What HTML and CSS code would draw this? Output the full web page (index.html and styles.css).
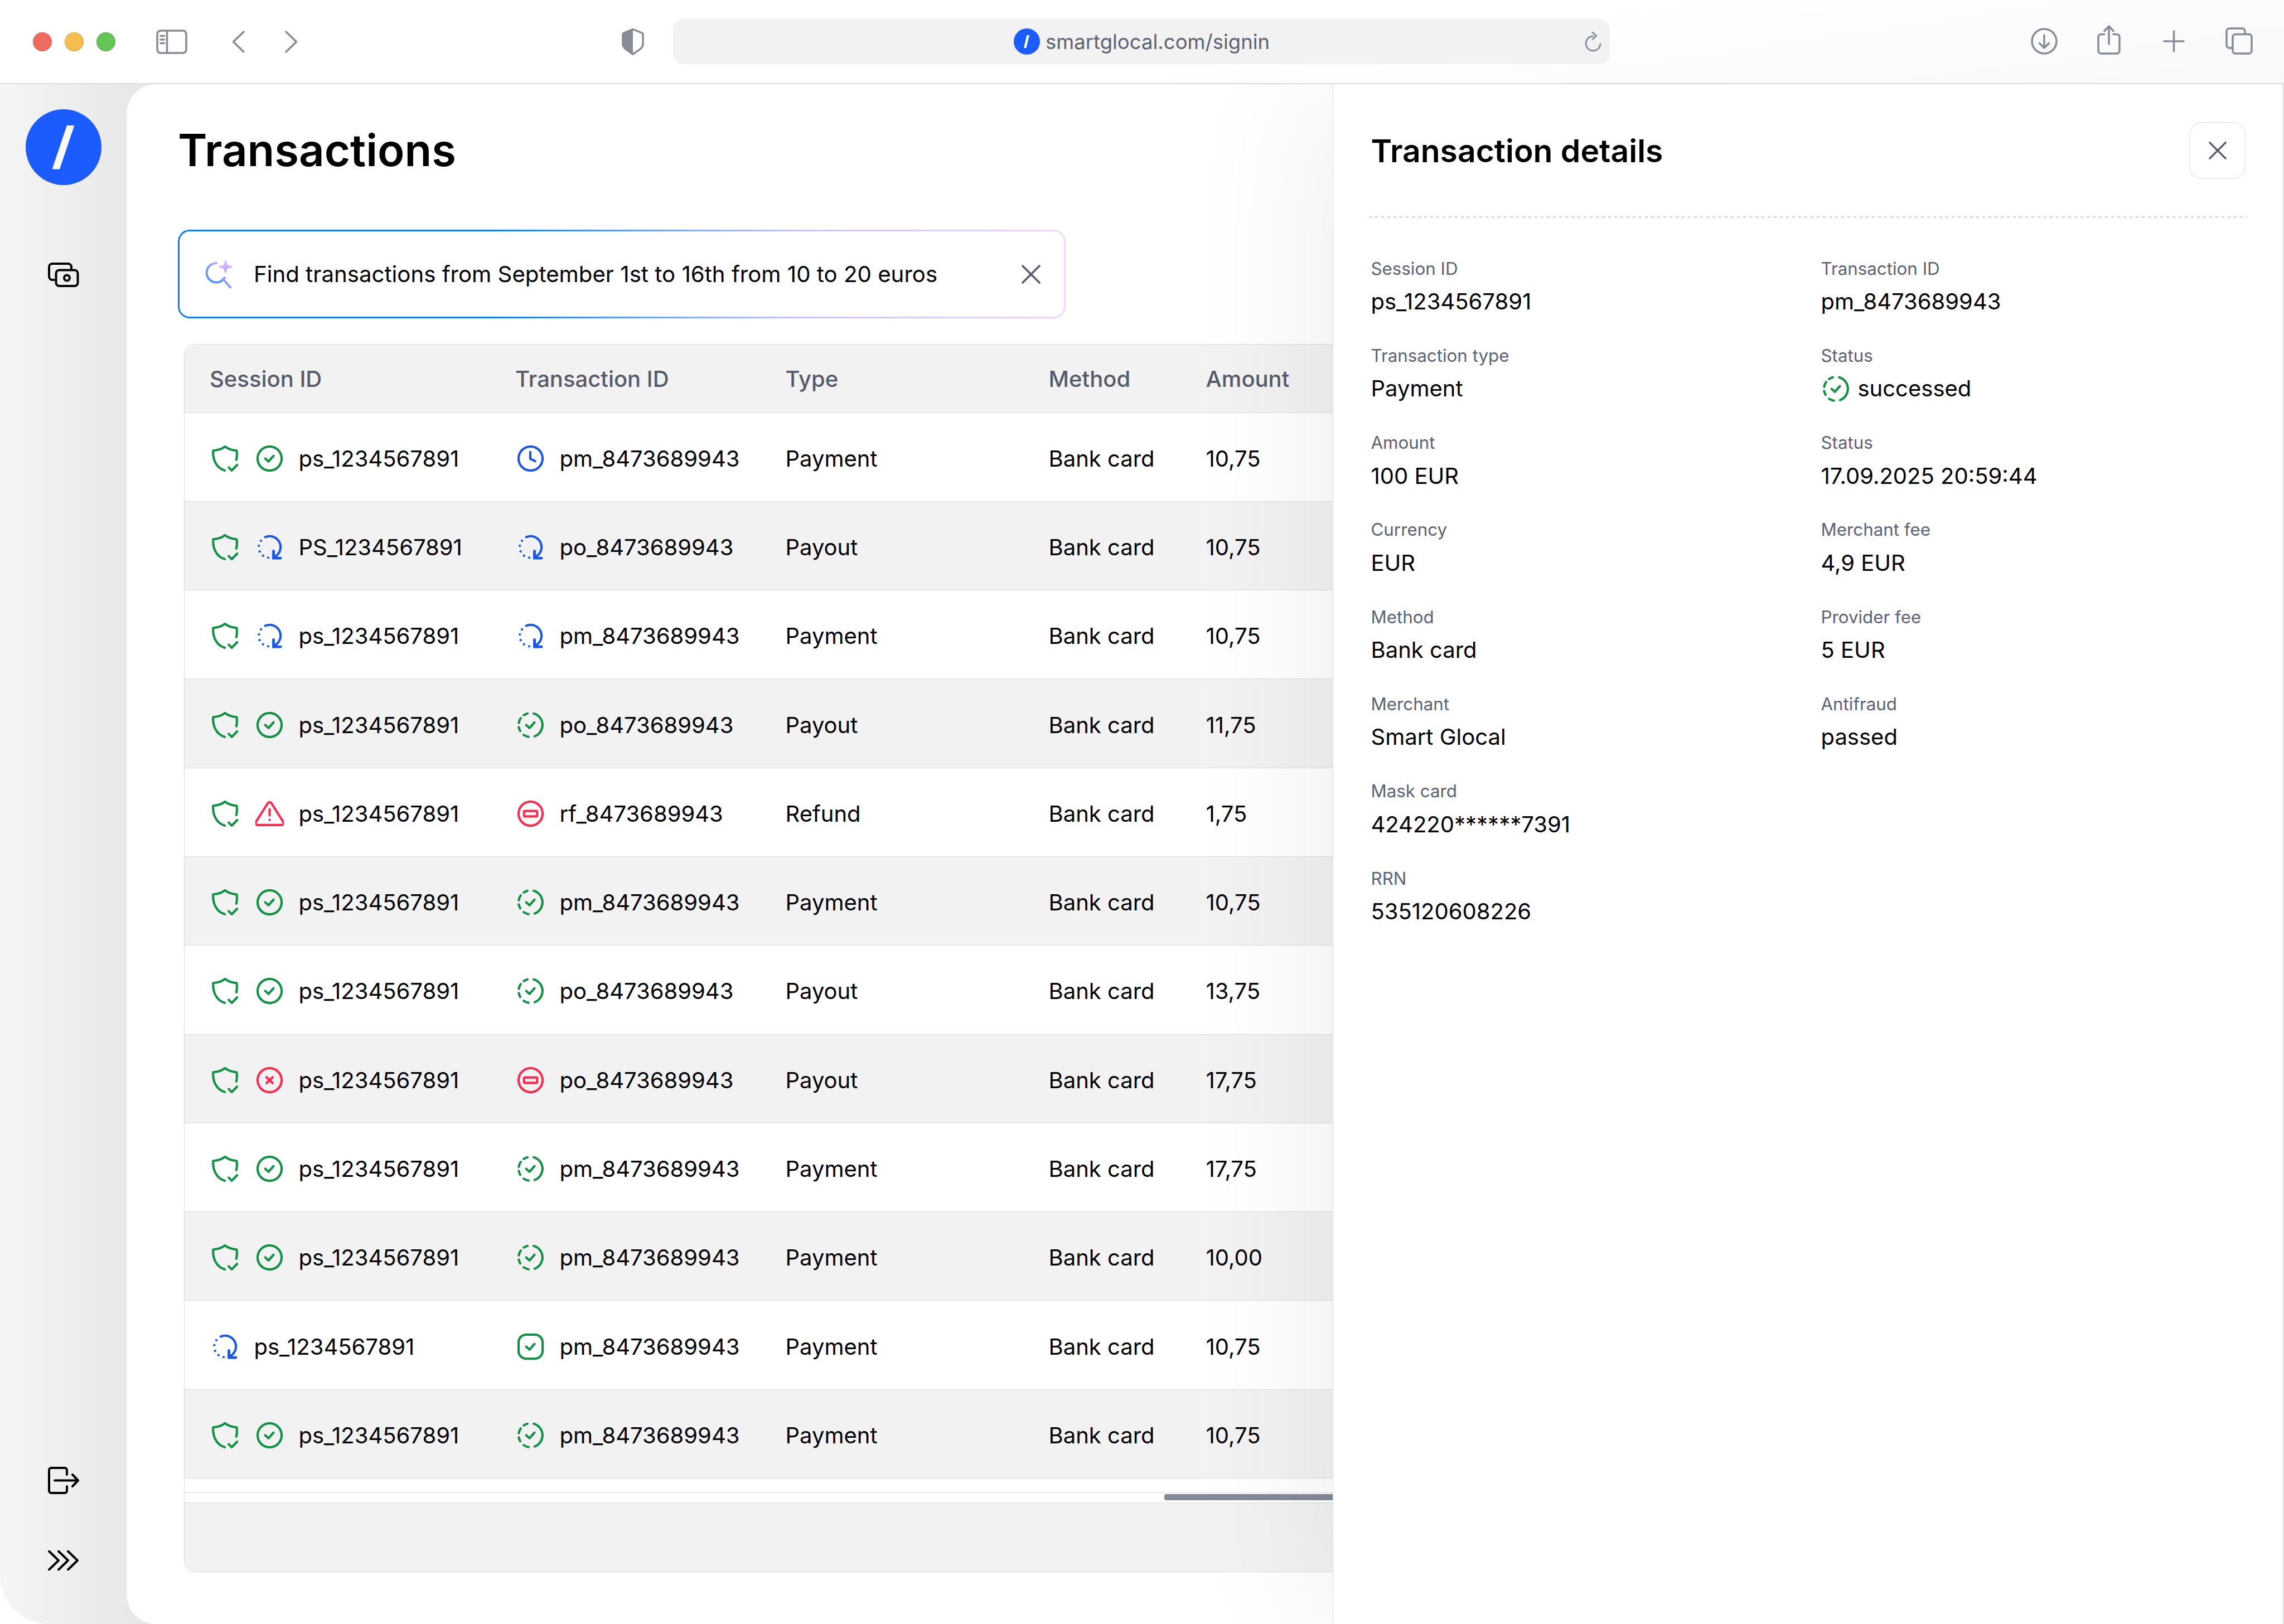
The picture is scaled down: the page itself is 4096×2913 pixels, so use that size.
FILE: index.html
```html
<!DOCTYPE html>
<html lang="en">
<head>
  <meta charset="UTF-8" />
  <title>Transactions</title>
  <link rel="stylesheet" href="styles.css">
</head>
<body>

<!-- icon sprite -->
<svg class="sprite" xmlns="http://www.w3.org/2000/svg">
  <defs>
    <linearGradient id="glassStroke" gradientUnits="userSpaceOnUse" x1="24" y1="4" x2="12" y2="40">
      <stop offset="0" stop-color="#c3a8ff"/>
      <stop offset="0.5" stop-color="#6f9dff"/>
      <stop offset="1" stop-color="#5a94ff"/>
    </linearGradient>
    <linearGradient id="sparkFill" gradientUnits="userSpaceOnUse" x1="36" y1="0" x2="36" y2="24">
      <stop offset="0" stop-color="#edbdff"/>
      <stop offset="1" stop-color="#b7a4ff"/>
    </linearGradient>
  </defs>
  <symbol id="i-shield" viewBox="0 0 24 24">
    <path d="M22.4 13.2C23 10.5 23 7.5 22.7 4.7 18 4.6 14.8 3.2 12 1 9.2 3.2 6 4.6 1.2 4.7 0.6 12 3.5 20.5 11.7 22.9"/>
    <path d="M15.4 20.1l2.8 2.8 4.9-5"/>
  </symbol>
  <symbol id="i-check" viewBox="0 0 24 24">
    <circle cx="12" cy="12" r="11"/>
    <path d="M8 12l3 2.7 4.6-5.2"/>
  </symbol>
  <symbol id="i-load" viewBox="0 0 24 24">
    <path d="M8 2.8A10 10 0 0 1 12 1.9 10 10 0 0 1 17.3 20.4"/>
    <path class="heavy" d="M15.6 15.6V22H22"/>
    <g class="dots">
      <circle cx="4.1" cy="6.1" r="1.1"/>
      <circle cx="2.2" cy="10.7" r="1.1"/>
      <circle cx="2.9" cy="15.9" r="1.1"/>
      <circle cx="6" cy="19.8" r="1.1"/>
      <circle cx="10.7" cy="21.6" r="1.1"/>
    </g>
  </symbol>
  <symbol id="i-clock" viewBox="0 0 24 24">
    <circle cx="12" cy="12" r="11"/>
    <path d="M11.7 6v6.2l4.5 2.2"/>
  </symbol>
  <symbol id="i-dash" viewBox="0 0 24 24">
    <path d="M14.85 1.4A11 11 0 0 1 15.76 22.3"/>
    <path d="M10.1 22.8A11 11 0 0 1 5.7 21"/>
    <path d="M2.5 17.5A11 11 0 0 1 1.2 13.9"/>
    <path d="M1.2 10.1A11 11 0 0 1 3 5.7"/>
    <path d="M5.7 3A11 11 0 0 1 9.15 1.4"/>
    <path d="M8 12l3 2.7 4.6-5.2"/>
  </symbol>
  <symbol id="i-stop" viewBox="0 0 24 24">
    <circle cx="12" cy="12" r="11"/>
    <rect x="6" y="9.5" width="12" height="5" rx="0.8"/>
  </symbol>
  <symbol id="i-warn" viewBox="-1 0 26 24">
    <path d="M10.4 2.3a1.9 1.9 0 0 1 3.2 0L24.5 19.5a1.9 1.9 0 0 1-1.6 2.9H1.1a1.9 1.9 0 0 1-1.6-2.9Z"/>
    <path d="M12 8v5.6M12 17.7v.1"/>
  </symbol>
  <symbol id="i-cross" viewBox="0 0 24 24">
    <circle cx="12" cy="12" r="11"/>
    <path d="M9.2 9.3l5.6 5.4M14.8 9.3l-5.6 5.4"/>
  </symbol>
  <symbol id="i-square" viewBox="0 0 24 24">
    <rect x="1" y="1" width="22" height="22" rx="7"/>
    <path d="M8 12l3 2.7 4.6-5.2"/>
  </symbol>
</svg>

<header class="topbar">
  <div class="lights">
    <span class="light light-red"></span>
    <span class="light light-yellow"></span>
    <span class="light light-green"></span>
  </div>
  <svg class="tb tb-side" viewBox="0 0 56 44">
    <rect x="2" y="2" width="52" height="40" rx="6"/>
    <path d="M19.5 2v40M8 11.5h6.5M8 18h6.5M8 24.500h6.500"/>
  </svg>
  <svg class="tb tb-back" viewBox="0 0 24 40"><path d="M21 2L2.500 20 21 38"/></svg>
  <svg class="tb tb-next" viewBox="0 0 24 40"><path d="M3 2l18.500 18L3 38"/></svg>
  <svg class="tb tb-guard" viewBox="0 0 40 48">
    <path class="guard-half" d="M20 1.500V46.500C12 39 2 37 2 28V11Q2 9 4 8Z"/>
    <path d="M20 1.500L36 8Q38 9 38 11V28C38 37 28 39 20 46.500 12 39 2 37 2 28V11Q2 9 4 8Z"/>
  </svg>
  <div class="urlbar">
    <span class="url-logo"></span>
    <span class="url-text">smartglocal.com/signin</span>
    <svg class="tb tb-reload" viewBox="0 0 32 38">
      <path d="M16 9A13 13 0 1 0 29 23"/>
      <path d="M15 2l7 6.500-7 6"/>
    </svg>
  </div>
  <div class="tb-actions">
    <svg class="tb tb-down" viewBox="0 0 50 48">
      <circle cx="25" cy="24" r="22"/>
      <path d="M25 13v23M16.500 27.500L25 36l8.500-8.500"/>
    </svg>
    <svg class="tb tb-share" viewBox="0 0 42 53">
      <path d="M13 16.500H7a5 5 0 0 0-5 5V46a5 5 0 0 0 5 5h28a5 5 0 0 0 5-5V21.500a5 5 0 0 0-5-5h-6"/>
      <path d="M21 2v32M13 10.500L21 2l8 8.500"/>
    </svg>
    <svg class="tb tb-plus" viewBox="0 0 39 40"><path d="M19.500 2v36M2 20h35"/></svg>
    <svg class="tb tb-tabs" viewBox="0 0 49 49">
      <path d="M11 37H7a5 5 0 0 1-5-5V7a5 5 0 0 1 5-5h23a5 5 0 0 1 5 5v5"/>
      <rect x="13" y="12.500" width="34" height="34.500" rx="5"/>
    </svg>
  </div>
</header>

<div class="app">
  <aside class="sidebar">
    <div class="logo"><span class="logo-slash"></span></div>
    <svg class="side-ico side-wallet" viewBox="0 0 56 44">
      <path d="M11 31H8a6 6 0 0 1-6-6V8a6 6 0 0 1 6-6h28a6 6 0 0 1 6 6v4"/>
      <rect x="14.500" y="13.500" width="39" height="28.500" rx="6"/>
      <circle cx="34" cy="27.500" r="5"/>
    </svg>
    <svg class="side-ico side-exit" viewBox="0 0 56 49">
      <path d="M34 14V6a4 4 0 0 0-4-4H6a4 4 0 0 0-4 4v37a4 4 0 0 0 4 4h24a4 4 0 0 0 4-4v-8"/>
      <path d="M12 24.500h41M44 14l10 10.500L44 35"/>
    </svg>
    <svg class="side-ico side-more" viewBox="0 0 56 36">
      <path d="M2 1.500L19 18 2 34.500M19 1.500L36 18 19 34.500M36 1.500L53 18 36 34.500"/>
    </svg>
  </aside>

  <main class="main">
    <h1>Transactions</h1>

    <div class="search">
      <svg class="search-ico" viewBox="0 0 50 51">
        <path class="glass" d="M21.600 6A17.300 17.300 0 1 0 35.300 31"/>
        <path class="glass-handle" d="M32.700 35.500L45.400 49.800"/>
        <path class="spark" d="M36.500 0c1.600 0 2 6.500 3 8.500 1 2 9.500 2.300 9.500 4s-8.500 2-9.500 4c-1 2-1.400 7.200-3 7.200s-2-5.200-3-7.200c-1-2-9.500-2.300-9.500-4s8.500-2 9.500-4c1-2 1.400-8.500 3-8.500Z"/>
      </svg>
      <span class="search-text">Find transactions from September 1st to 16th from 10 to 20 euros</span>
      <svg class="search-close" viewBox="0 0 34 34"><path d="M2 2l30 30M32 2L2 32"/></svg>
    </div>

    <div class="table">
      <div class="row row-head">
        <div>Session ID</div>
        <div>Transaction ID</div>
        <div>Type</div>
        <div>Method</div>
        <div>Amount</div>
      </div>

      <div class="row">
        <div class="ids"><svg class="ico ok shield"><use href="#i-shield"/></svg><svg class="ico ok"><use href="#i-check"/></svg><span>ps_1234567891</span></div>
        <div class="ids"><svg class="ico info"><use href="#i-clock"/></svg><span>pm_8473689943</span></div>
        <div>Payment</div><div>Bank card</div><div>10,75</div>
      </div>
      <div class="row">
        <div class="ids"><svg class="ico ok shield"><use href="#i-shield"/></svg><svg class="ico info"><use href="#i-load"/></svg><span>PS_1234567891</span></div>
        <div class="ids"><svg class="ico info"><use href="#i-load"/></svg><span>po_8473689943</span></div>
        <div>Payout</div><div>Bank card</div><div>10,75</div>
      </div>
      <div class="row">
        <div class="ids"><svg class="ico ok shield"><use href="#i-shield"/></svg><svg class="ico info"><use href="#i-load"/></svg><span>ps_1234567891</span></div>
        <div class="ids"><svg class="ico info"><use href="#i-load"/></svg><span>pm_8473689943</span></div>
        <div>Payment</div><div>Bank card</div><div>10,75</div>
      </div>
      <div class="row">
        <div class="ids"><svg class="ico ok shield"><use href="#i-shield"/></svg><svg class="ico ok"><use href="#i-check"/></svg><span>ps_1234567891</span></div>
        <div class="ids"><svg class="ico ok"><use href="#i-dash"/></svg><span>po_8473689943</span></div>
        <div>Payout</div><div>Bank card</div><div>11,75</div>
      </div>
      <div class="row">
        <div class="ids"><svg class="ico ok shield"><use href="#i-shield"/></svg><svg class="ico bad wide"><use href="#i-warn"/></svg><span>ps_1234567891</span></div>
        <div class="ids"><svg class="ico bad"><use href="#i-stop"/></svg><span>rf_8473689943</span></div>
        <div>Refund</div><div>Bank card</div><div>1,75</div>
      </div>
      <div class="row">
        <div class="ids"><svg class="ico ok shield"><use href="#i-shield"/></svg><svg class="ico ok"><use href="#i-check"/></svg><span>ps_1234567891</span></div>
        <div class="ids"><svg class="ico ok"><use href="#i-dash"/></svg><span>pm_8473689943</span></div>
        <div>Payment</div><div>Bank card</div><div>10,75</div>
      </div>
      <div class="row">
        <div class="ids"><svg class="ico ok shield"><use href="#i-shield"/></svg><svg class="ico ok"><use href="#i-check"/></svg><span>ps_1234567891</span></div>
        <div class="ids"><svg class="ico ok"><use href="#i-dash"/></svg><span>po_8473689943</span></div>
        <div>Payout</div><div>Bank card</div><div>13,75</div>
      </div>
      <div class="row">
        <div class="ids"><svg class="ico ok shield"><use href="#i-shield"/></svg><svg class="ico bad"><use href="#i-cross"/></svg><span>ps_1234567891</span></div>
        <div class="ids"><svg class="ico bad"><use href="#i-stop"/></svg><span>po_8473689943</span></div>
        <div>Payout</div><div>Bank card</div><div>17,75</div>
      </div>
      <div class="row">
        <div class="ids"><svg class="ico ok shield"><use href="#i-shield"/></svg><svg class="ico ok"><use href="#i-check"/></svg><span>ps_1234567891</span></div>
        <div class="ids"><svg class="ico ok"><use href="#i-dash"/></svg><span>pm_8473689943</span></div>
        <div>Payment</div><div>Bank card</div><div>17,75</div>
      </div>
      <div class="row">
        <div class="ids"><svg class="ico ok shield"><use href="#i-shield"/></svg><svg class="ico ok"><use href="#i-check"/></svg><span>ps_1234567891</span></div>
        <div class="ids"><svg class="ico ok"><use href="#i-dash"/></svg><span>pm_8473689943</span></div>
        <div>Payment</div><div>Bank card</div><div>10,00</div>
      </div>
      <div class="row">
        <div class="ids"><svg class="ico info"><use href="#i-load"/></svg><span>ps_1234567891</span></div>
        <div class="ids"><svg class="ico ok"><use href="#i-square"/></svg><span>pm_8473689943</span></div>
        <div>Payment</div><div>Bank card</div><div>10,75</div>
      </div>
      <div class="row">
        <div class="ids"><svg class="ico ok shield"><use href="#i-shield"/></svg><svg class="ico ok"><use href="#i-check"/></svg><span>ps_1234567891</span></div>
        <div class="ids"><svg class="ico ok"><use href="#i-dash"/></svg><span>pm_8473689943</span></div>
        <div>Payment</div><div>Bank card</div><div>10,75</div>
      </div>

      <div class="table-gap"></div>
      <div class="scroll-track"><div class="scroll-thumb"></div></div>
      <div class="table-foot"></div>
    </div>
  </main>

  <section class="details">
    <div class="details-head">
      <h2>Transaction details</h2>
      <button class="close-btn" type="button">
        <svg viewBox="0 0 34 34"><path d="M2 2l30 30M32 2L2 32"/></svg>
      </button>
    </div>
    <div class="dots-line"></div>

    <dl class="fields">
      <div><dt>Session ID</dt><dd>ps_1234567891</dd></div>
      <div><dt>Transaction ID</dt><dd>pm_8473689943</dd></div>
      <div><dt>Transaction type</dt><dd>Payment</dd></div>
      <div><dt>Status</dt><dd class="status"><svg class="ico ok"><use href="#i-dash"/></svg>successed</dd></div>
      <div><dt>Amount</dt><dd>100 EUR</dd></div>
      <div><dt>Status</dt><dd>17.09.2025 20:59:44</dd></div>
      <div><dt>Currency</dt><dd>EUR</dd></div>
      <div><dt>Merchant fee</dt><dd>4,9 EUR</dd></div>
      <div><dt>Method</dt><dd>Bank card</dd></div>
      <div><dt>Provider fee</dt><dd>5 EUR</dd></div>
      <div><dt>Merchant</dt><dd>Smart Glocal</dd></div>
      <div><dt>Antifraud</dt><dd>passed</dd></div>
      <div><dt>Mask card</dt><dd>424220******7391</dd></div>
      <div></div>
      <div><dt>RRN</dt><dd>535120608226</dd></div>
    </dl>
  </section>
</div>

</body>
</html>
```

FILE: styles.css
```css
* { box-sizing: border-box; }

html, body {
  margin: 0;
  height: 2913px;
  overflow: hidden;
}

body {
  background: #fff;
  color: #000;
  font-family: Inter, "Noto Sans", sans-serif;
  font-size: 40px;
}

.sprite {
  position: absolute;
  width: 0;
  height: 0;
}

/* browser chrome */

.topbar {
  height: 151px;
  display: flex;
  align-items: center;
  padding-left: 59px;
  border-bottom: 2px solid #dcdcdc;
  background: linear-gradient(172deg, #fff 55%, #f8f8f8 100%);
}

.lights {
  display: flex;
  gap: 23px;
  margin-right: 73px;
}

.light {
  width: 34px;
  height: 34px;
  border-radius: 50%;
  border: 1px solid rgba(0,0,0,0.12);
}

.light-red { background: #ef6b5f; }
.light-yellow { background: #f5bd4f; }
.light-green { background: #62c554; }

.tb {
  fill: none;
  stroke: #868b96;
  stroke-width: 3.5;
  stroke-linecap: round;
  stroke-linejoin: round;
  flex: none;
}

.tb-side { width: 56px; height: 44px; margin-right: 80px; }
.tb-back { width: 24px; height: 40px; margin-right: 70px; }
.tb-next { width: 24px; height: 40px; margin-right: 581px; }
.tb-guard { width: 40px; height: 48px; margin-right: 52px; }
.guard-half { fill: #868b96; stroke: none; }

.urlbar {
  position: relative;
  width: 1680px;
  height: 80px;
  background: #f2f2f2;
  border-radius: 18px;
  display: flex;
  align-items: center;
  padding-left: 611px;
  color: #5e6372;
  font-size: 36.5px;
}

.url-logo {
  position: relative;
  width: 47px;
  height: 47px;
  border-radius: 50%;
  background: #1c5cff;
  margin-right: 10px;
}

.url-logo::after {
  content: "";
  position: absolute;
  left: 18px;
  top: 12px;
  width: 10px;
  height: 23px;
  background: #fff;
  clip-path: polygon(55% 0, 100% 0, 45% 100%, 0 100%);
}

.tb-reload {
  position: absolute;
  right: 14px;
  top: 21px;
  width: 32px;
  height: 38px;
  stroke-width: 2.8;
}

.tb-actions {
  display: flex;
  align-items: flex-end;
  margin: 0 0 6px 754px;
}

.tb-down { width: 50px; height: 48px; margin-right: 70px; }
.tb-share { width: 42px; height: 53px; margin-right: 76px; }
.tb-plus { width: 39px; height: 40px; margin-right: 73px; margin-bottom: 4px; }
.tb-tabs { width: 49px; height: 49px; }

/* app shell */

.app {
  height: 2762px;
  display: flex;
  background: linear-gradient(90deg, #f5f5f5 0, #e8e8e8 227px);
  border-bottom-left-radius: 88px;
  overflow: hidden;
}

.sidebar {
  width: 227px;
  flex: none;
  display: flex;
  flex-direction: column;
  align-items: center;
  padding: 45px 0 96px;
}

.logo {
  width: 136px;
  height: 136px;
  border-radius: 50%;
  background: #1c5cff;
  display: flex;
  align-items: center;
  justify-content: center;
}

.logo-slash {
  width: 40px;
  height: 79px;
  background: #fbfbfb;
  clip-path: polygon(66.500% 0, 100% 0, 33.500% 100%, 0 100%);
}

.side-ico {
  flex: none;
  fill: none;
  stroke: #000;
  stroke-width: 4;
  stroke-linecap: round;
  stroke-linejoin: round;
  width: 56px;
}

.side-wallet { height: 44px; margin-top: 139px; }
.side-exit { height: 49px; margin-top: auto; }
.side-more { height: 36px; margin-top: 101px; }

/* transactions */

.main {
  flex: 1;
  min-width: 0;
  background: #fff;
  border-radius: 53px 0 0 53px;
  padding: 68px 0 0 92px;
  overflow: hidden;
}

h1 {
  margin: 0;
  font-size: 79.6px;
  line-height: 100px;
  font-weight: 600;
}

.search {
  width: 1592px;
  height: 159px;
  margin-top: 93px;
  display: flex;
  align-items: center;
  padding: 0 42px 0 46px;
  border: 3px solid transparent;
  border-radius: 21px;
  background:
    linear-gradient(#fff, #fff) padding-box,
    linear-gradient(90deg, #0a7cff 0, #0a7cff 35%, #c8c4ff 70%, #f0d8ff 100%) border-box;
}

.search-text { font-size: 40.2px; }

.search-ico {
  width: 50px;
  height: 51px;
  flex: none;
  margin-right: 37px;
}

.glass {
  fill: none;
  stroke: url(#glassStroke);
  stroke-width: 4;
}

.glass-handle {
  fill: none;
  stroke: #8ea2ff;
  stroke-width: 4;
  stroke-linecap: round;
}

.spark { fill: url(#sparkFill); }

.search-close {
  width: 34px;
  height: 34px;
  margin-left: auto;
  fill: none;
  stroke: #555b6b;
  stroke-width: 3.6;
  stroke-linecap: round;
}

.table {
  width: 2400px;
  margin: 46px 0 0 11px;
  border: 1.5px solid #dcdcdc;
  border-radius: 20px;
  overflow: hidden;
}

.row {
  height: 159.3px;
  display: grid;
  grid-template-columns: 548px 484.5px 472px 282px 1fr;
  align-items: center;
  padding: 5px 0 0 45px;
  border-bottom: 1.5px solid #dcdcdc;
}

.row:nth-child(odd) {
  background: #f2f2f2;
}

.row-head {
  height: 122.5px;
  padding-top: 1.5px;
  background: #f2f2f2;
  color: #555b6b;
  font-weight: 500;
}

.ids {
  display: flex;
  align-items: center;
  gap: 28.5px;
  padding-left: 4px;
}

.ico {
  width: 47px;
  height: 47px;
  flex: none;
  fill: none;
  stroke: currentColor;
  stroke-width: 2.1;
  stroke-linecap: round;
  stroke-linejoin: round;
}

.ico.shield { margin-right: 4.5px; }
.ico.wide { width: 51px; margin: 0 -2px; }

.ok { color: #0f9244; }
.info { color: #1a56ea; }
.bad { color: #fb2b50; }

.heavy { stroke-width: 2.5; stroke-linejoin: miter; }
.dots { fill: currentColor; stroke: none; }

.table-gap {
  height: 26px;
  border-bottom: 1.5px solid #dcdcdc;
}

.scroll-track {
  height: 18px;
  padding: 2px 0 0 1757px;
  border-bottom: 1.5px solid #dcdcdc;
}

.scroll-thumb {
  height: 11px;
  background: #858a96;
  border-radius: 3px;
}

.table-foot {
  height: 123px;
  background: #f2f2f2;
}

/* details panel */

.details {
  position: relative;
  width: 1706px;
  flex: none;
  background: #fff;
  padding: 68px 64px 0 67.5px;
  border-left: 1.5px solid #dcdcdc;
  border-right: 2px solid #dcdcdc;
  box-shadow: -30px 0 240px rgba(0,0,0,0.065);
}

.details-head {
  display: flex;
  align-items: center;
  justify-content: space-between;
  height: 102px;
}

h2 {
  margin: 0;
  font-size: 57px;
  font-weight: 600;
}

.close-btn {
  width: 101px;
  height: 102px;
  margin-right: 3px;
  padding: 0;
  background: #fff;
  border: 1.5px solid #dcdcdc;
  border-radius: 23px;
  display: flex;
  align-items: center;
  justify-content: center;
}

.close-btn svg {
  width: 32px;
  height: 32px;
  fill: none;
  stroke: #555b6b;
  stroke-width: 3.6;
  stroke-linecap: round;
}

.dots-line {
  height: 3px;
  margin: 67px 0 0 -3.5px;
  background: linear-gradient(90deg, #dcdcdc 50%, transparent 50%) 0 0 / 11px 3px repeat-x;
}

.fields {
  margin: 70.5px 0 0;
  display: grid;
  grid-template-columns: 807px 1fr;
  row-gap: 48.8px;
}

dt {
  font-size: 31.300px;
  line-height: 40px;
  color: #5b6274;
}

dd {
  margin: 11.500px 0 0;
  line-height: 56px;
}

.status {
  display: flex;
  align-items: center;
  gap: 16px;
}

.status .ico { margin-left: 3px; }
```
